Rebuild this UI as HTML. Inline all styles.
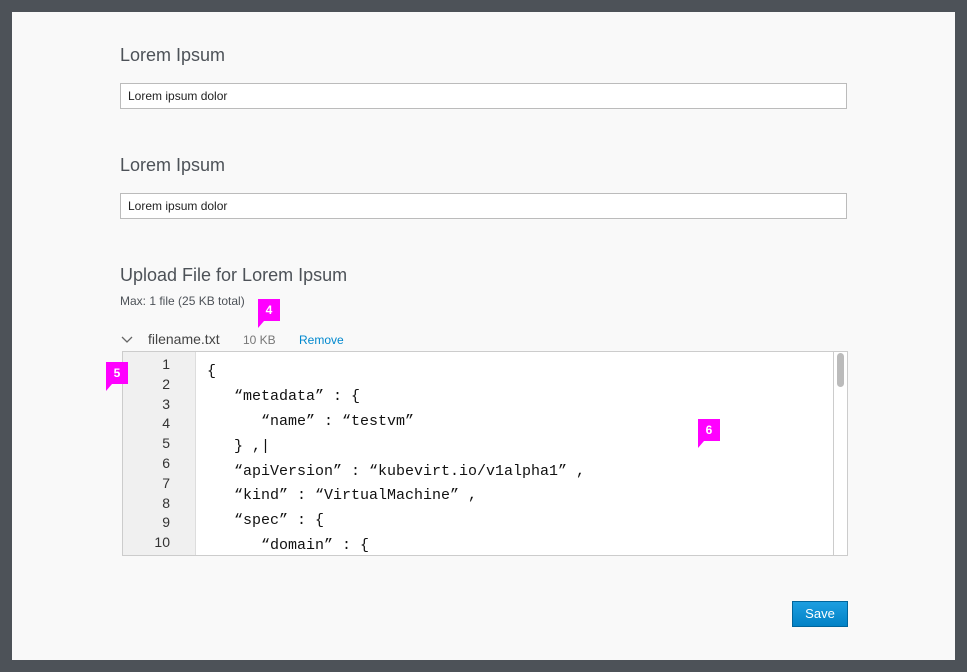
<!DOCTYPE html>
<html><head><style>
body{margin:0;width:967px;height:672px;background:#4d5258;position:relative;overflow:hidden;font-family:"Liberation Sans",sans-serif}
.p{position:absolute;left:12px;top:12px;width:943px;height:648px;background:#f9f9f9}
.a{position:absolute}
h2{position:absolute;margin:0;font-weight:normal;font-size:18px;color:#4d5258;left:120px}
.in{position:absolute;left:120px;height:24px;border:1px solid #bbb;background:#fff;font-size:12px;line-height:24px;padding-left:7px;box-sizing:content-box;width:718px;color:#222}
.tag{position:absolute;background:#f0f;color:#fff;font-weight:bold;font-size:12px;width:22px;height:22px;text-align:center;line-height:22px}
.tag:after{content:"";position:absolute;left:0;top:22px;border-left:6px solid #f0f;border-bottom:7px solid transparent}
.code{position:absolute;left:122px;top:351px;width:724px;height:203px;border:1px solid #ccc;background:#fff;overflow:hidden}
.gut{position:absolute;left:0;top:0;width:72px;height:100%;background:#f0f0f0;border-right:1px solid #ddd;font-size:14px;color:#333;text-align:right}
.gut div{height:19.8px;line-height:19.8px;padding-right:25px}
.txt{position:absolute;left:84px;top:8px;font-family:"Liberation Mono",monospace;font-size:15px;color:#111;white-space:pre}
.txt div{height:24.9px;line-height:24.9px}
</style></head><body>
<div class="p"></div>
<h2 style="top:45px">Lorem Ipsum</h2>
<div class="in" style="top:83px">Lorem ipsum dolor</div>
<h2 style="top:155px">Lorem Ipsum</h2>
<div class="in" style="top:193px">Lorem ipsum dolor</div>
<h2 style="top:265px">Upload File for Lorem Ipsum</h2>
<div class="a" style="left:120px;top:294px;font-size:12px;color:#4d5258">Max: 1 file (25 KB total)</div>
<svg class="a" style="left:120px;top:335px" width="14" height="10"><path d="M2 2 L7 7 L12 2" fill="none" stroke="#666" stroke-width="1.3"/></svg>
<div class="a" style="left:148px;top:331px;font-size:14px;color:#444">filename.txt</div>
<div class="a" style="left:243px;top:333px;font-size:12px;color:#777">10 KB</div>
<div class="a" style="left:299px;top:333px;font-size:12px;color:#0088ce">Remove</div>
<div class="code">
<div class="gut"><div style="margin-top:3px">1</div><div>2</div><div>3</div><div>4</div><div>5</div><div>6</div><div>7</div><div>8</div><div>9</div><div>10</div></div>
<div class="txt"><div>{</div><div>   “metadata” : {</div><div>      “name” : “testvm”</div><div>   } ,|</div><div>   “apiVersion” : “kubevirt.io/v1alpha1” ,</div><div>   “kind” : “VirtualMachine” ,</div><div>   “spec” : {</div><div>      “domain” : {</div></div>
<div class="a" style="left:710px;top:0;width:13px;height:203px;border-left:1px solid #ccc;background:#fff"><div style="margin:1px 3px;width:7px;height:34px;border-radius:4px;background:#bbb"></div></div>
</div>
<div class="tag" style="left:258px;top:299px">4</div>
<div class="tag" style="left:106px;top:362px">5</div>
<div class="tag" style="left:698px;top:419px">6</div>
<div class="a" style="left:792px;top:601px;width:54px;height:24px;background:linear-gradient(#1d9ee0,#0282c6);border:1px solid #00659c;color:#fff;font-size:13px;text-align:center;line-height:24px">Save</div>
</body></html>
